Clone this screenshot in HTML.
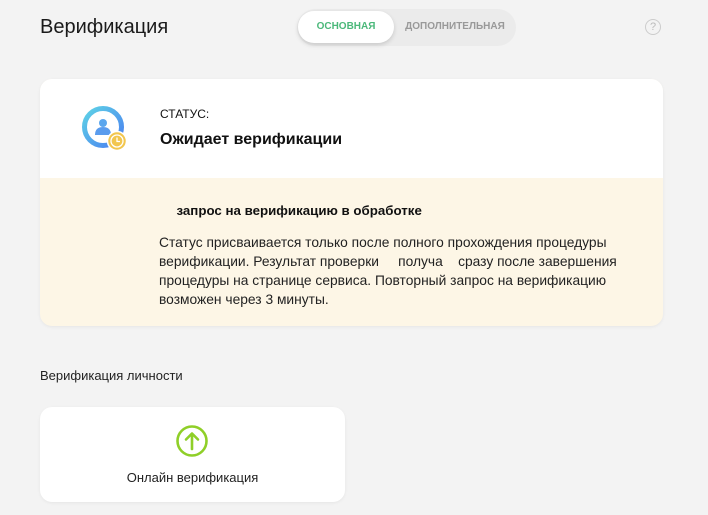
<!DOCTYPE html>
<html><head><meta charset="utf-8"><style>
*{margin:0;padding:0;box-sizing:border-box}
body{width:708px;height:515px;background:#f3f3f3;font-family:"Liberation Sans",sans-serif;color:#111;position:relative;overflow:hidden}
.a{position:absolute}
</style></head><body>
<div class="a" style="left:40px;top:16px;font-size:20px;color:#1a1a1a">Верификация</div>
<div class="a" style="left:297px;top:9px;width:219px;height:37px;border-radius:19px;background:#ebebeb"></div>
<div class="a" style="left:298px;top:11px;width:96px;height:32px;border-radius:16px;background:#fff;box-shadow:0 2px 5px rgba(0,0,0,.15);font-size:10px;font-weight:bold;color:#4bb87a;text-align:center;line-height:32px">ОСНОВНАЯ</div>
<div class="a" style="left:400px;top:11px;width:110px;height:32px;font-size:10px;font-weight:bold;color:#999;text-align:center;line-height:32px">ДОПОЛНИТЕЛЬНАЯ</div>
<div class="a" style="left:645px;top:19px;width:16px;height:16px;border:1px solid #ccc;border-radius:50%;font-size:11px;color:#bbb;text-align:center;line-height:14px">?</div>

<div class="a" style="left:40px;top:79px;width:623px;height:247px;border-radius:12px;background:#fdf6e6;overflow:hidden;box-shadow:0 1px 3px rgba(0,0,0,.06)">
 <div style="height:99px;background:#fff"></div>
</div>
<svg class="a" style="left:78px;top:102px" width="54" height="54" viewBox="0 0 54 54">
 <defs><linearGradient id="g" x1="0" y1="0" x2="1" y2="1"><stop offset="0" stop-color="#5ed3e6"/><stop offset="1" stop-color="#4a7ef0"/></linearGradient></defs>
 <circle cx="25" cy="25" r="18.5" fill="none" stroke="url(#g)" stroke-width="5"/>
 <circle cx="25" cy="21" r="4" fill="#5aa6ee"/>
 <path d="M17 33 q0 -8 8 -8 q8 0 8 8 z" fill="#5a9cee"/>
 <circle cx="39" cy="39" r="9.5" fill="#f2c64e" stroke="#fff" stroke-width="1.5"/>
 <circle cx="39" cy="39" r="6" fill="none" stroke="#fff" stroke-width="1.3"/>
 <path d="M39 35.5v4h3" fill="none" stroke="#fff" stroke-width="1.3"/>
</svg>
<div class="a" style="left:160px;top:107px;font-size:12px">СТАТУС:</div>
<div class="a" style="left:160px;top:131px;font-size:16px;font-weight:bold">Ожидает верификации</div>
<div class="a" style="left:158px;top:203px;font-size:13.3px;font-weight:bold">&nbsp;&nbsp;&nbsp;&nbsp;&nbsp;запрос на верификацию в обработке</div>
<div class="a" style="left:159px;top:233px;width:480px;font-size:13.8px;line-height:19px;color:#222">Статус присваивается только после полного прохождения процедуры верификации. Результат проверки &nbsp;&nbsp;&nbsp; получа&nbsp;&nbsp;&nbsp; сразу после завершения процедуры на странице сервиса. Повторный запрос на верификацию возможен через 3 минуты.</div>

<div class="a" style="left:40px;top:368px;font-size:13px;color:#222">Верификация личности</div>
<div class="a" style="left:40px;top:407px;width:305px;height:95px;border-radius:12px;background:#fff;box-shadow:0 1px 3px rgba(0,0,0,.06)"></div>
<svg class="a" style="left:175px;top:424px" width="34" height="34" viewBox="0 0 34 34">
 <circle cx="17" cy="17" r="14.5" fill="none" stroke="#8fcf28" stroke-width="2.6"/>
 <path d="M17 25V10M11 15.5l6-6 6 6" fill="none" stroke="#8fcf28" stroke-width="2.6" stroke-linecap="round" stroke-linejoin="round"/>
</svg>
<div class="a" style="left:40px;top:470px;width:305px;text-align:center;font-size:13px;color:#222">Онлайн верификация</div>
</body></html>
